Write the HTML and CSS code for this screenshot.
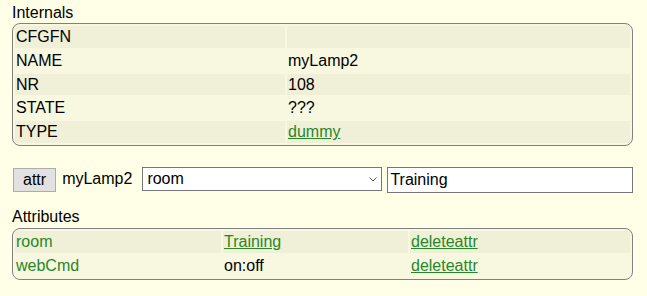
FILE: index.html
```html
<!DOCTYPE html>
<html>
<head>
<meta charset="utf-8">
<link rel="stylesheet" href="styles.css">
</head>
<body>
<div class="page">
  <div class="label">Internals</div>
  <table class="block internals">
    <tr class="odd"><td>CFGFN</td><td></td></tr>
    <tr class="even"><td>NAME</td><td>myLamp2</td></tr>
    <tr class="odd"><td>NR</td><td>108</td></tr>
    <tr class="even"><td>STATE</td><td>???</td></tr>
    <tr class="odd"><td>TYPE</td><td><a href="#">dummy</a></td></tr>
  </table>

  <div class="attrrow">
    <button class="btn">attr</button>
    <span class="devname">myLamp2</span>
    <div class="selwrap">
      <select class="sel"><option>room</option></select>
      <svg class="chev" width="8" height="5" viewBox="0 0 8 5"><path d="M0.5 0.5 L4 4 L7.5 0.5" fill="none" stroke="#555" stroke-width="1"/></svg>
    </div>
    <input class="txt" type="text" value="Training">
  </div>

  <div class="label label2">Attributes</div>
  <table class="block attrs">
    <tr class="odd"><td class="dname">room</td><td><a href="#">Training</a></td><td><a href="#">deleteattr</a></td></tr>
    <tr class="even"><td class="dname">webCmd</td><td>on:off</td><td><a href="#">deleteattr</a></td></tr>
  </table>
</div>
</body>
</html>
```

FILE: styles.css
```css
html, body {
  margin: 0;
  padding: 0;
  background: #FFFFE7;
}
body {
  font-family: "Liberation Sans", Arial, sans-serif;
  font-size: 16px;
  color: #000;
}
.page {
  display: flex;
  flex-direction: column;
  padding: 3px 14px 0 12px;
}
.label {
  line-height: 20px;
}
.label2 {
  margin-top: 14.5px;
  line-height: 20.5px;
}
table.block {
  width: 100%;
  border: 1px solid #808080;
  border-radius: 8px;
  border-collapse: separate;
  border-spacing: 2px;
  background: #F8F8E0;
}
table.block td {
  padding: 1px;
  line-height: 19.8px;
  box-sizing: border-box;
  white-space: nowrap;
}
tr.odd td { background: #F0F0D8; }
tr.even td { background: #F8F8E0; }
a {
  color: #278727;
  text-decoration: underline;
}
.internals td:first-child { width: 270px; }
.attrs td:nth-child(1) { width: 206px; }
.attrs td:nth-child(2) { width: 185px; }
.dname { color: #278727; }

.attrrow {
  display: flex;
  align-items: flex-start;
  margin-top: 21px;
  height: 26px;
}
.btn {
  margin: 1px 0 0 1px;
  height: 24px;
  padding: 0 9px;
  font-family: "Liberation Sans", Arial, sans-serif;
  font-size: 16px;
  background: #E1E1E1;
  border: 1px solid #ADADAD;
  border-radius: 0;
  color: #000;
}
.devname {
  margin: 2px 0 0 6px;
  line-height: 20px;
}
.selwrap {
  position: relative;
  margin-left: 10px;
  width: 240px;
  height: 24px;
}
.sel {
  -webkit-appearance: none;
  appearance: none;
  width: 240px;
  height: 24px;
  box-sizing: border-box;
  margin: 0;
  padding: 0 0 0 4px;
  font-family: "Liberation Sans", Arial, sans-serif;
  font-size: 16px;
  background: #fff;
  border: 1px solid #767676;
  border-radius: 0;
  color: #000;
}
.chev {
  position: absolute;
  right: 5px;
  top: 10px;
}
.txt {
  margin-left: 5px;
  flex: 1;
  height: 26px;
  box-sizing: border-box;
  padding: 0 2px;
  font-family: "Liberation Sans", Arial, sans-serif;
  font-size: 16px;
  border: 1px solid #767676;
  border-radius: 0;
  background: #fff;
  color: #000;
}
```
